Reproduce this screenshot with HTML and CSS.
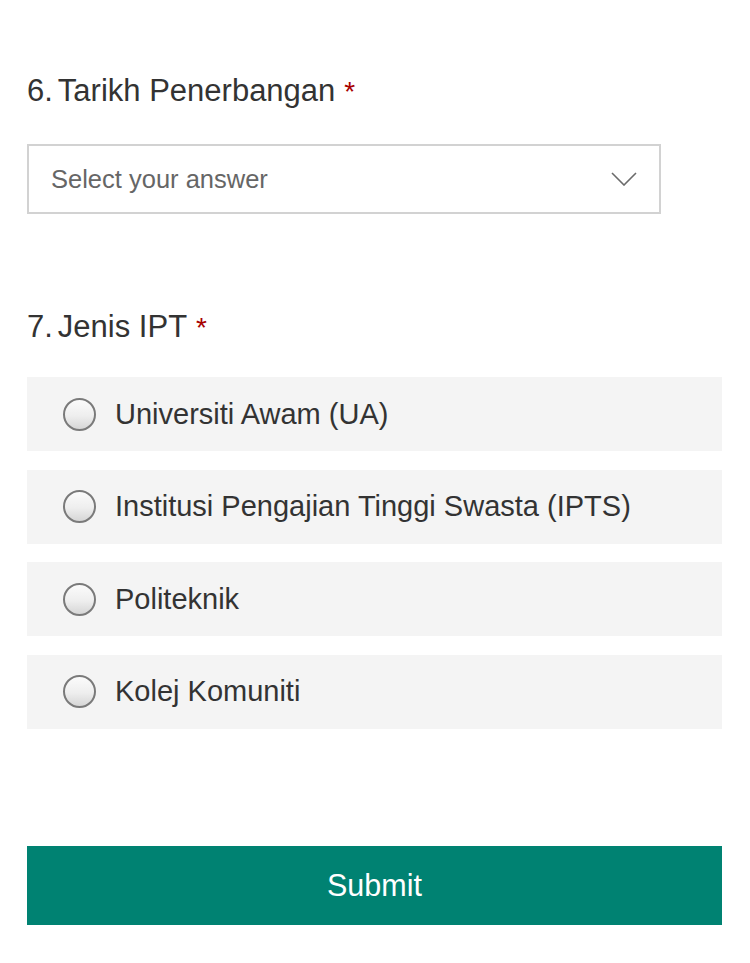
FILE: index.html
```html
<!DOCTYPE html>
<html lang="ms">
<head>
<meta charset="utf-8">
<title>Borang</title>
<link rel="stylesheet" href="styles.css">
</head>
<body>
<main class="form">
  <section class="question q-date">
    <h2 class="q-title">6.<span class="q-text">Tarikh Penerbangan</span><span class="req">*</span></h2>
    <div class="select">
      <span class="placeholder">Select your answer</span>
      <svg class="chevron" width="26" height="14" viewBox="0 0 26 14" aria-hidden="true">
        <polyline points="1,1 13,13 25,1" fill="none" stroke="#6b6b6b" stroke-width="1.6"/>
      </svg>
    </div>
  </section>

  <section class="question q-ipt">
    <h2 class="q-title">7.<span class="q-text">Jenis IPT</span><span class="req">*</span></h2>
    <div class="options">
      <label class="option"><span class="radio"></span><span class="opt-text">Universiti Awam (UA)</span></label>
      <label class="option"><span class="radio"></span><span class="opt-text">Institusi Pengajian Tinggi Swasta (IPTS)</span></label>
      <label class="option"><span class="radio"></span><span class="opt-text">Politeknik</span></label>
      <label class="option"><span class="radio"></span><span class="opt-text">Kolej Komuniti</span></label>
    </div>
  </section>

  <button class="submit" type="button">Submit</button>
</main>
</body>
</html>
```

FILE: styles.css
```css
html, body {
  margin: 0;
  padding: 0;
  background: #ffffff;
}

body {
  font-family: "Liberation Sans", Arial, sans-serif;
  color: #333333;
}

.form {
  padding: 72px 28px 0 27px;
  display: flex;
  flex-direction: column;
}

.q-title {
  margin: 0;
  font-size: 31px;
  line-height: 37px;
  font-weight: normal;
  color: #333333;
}

.q-text {
  margin-left: 5px;
}

.req {
  color: #a80000;
  margin-left: 9px;
  font-size: 28px;
}

.select {
  margin-top: 34px;
  width: 634px;
  height: 70px;
  box-sizing: border-box;
  border: 2px solid #d2d2d2;
  display: flex;
  align-items: center;
  justify-content: space-between;
  padding: 0 22px 0 22px;
  background: #ffffff;
}

.placeholder {
  font-size: 25.5px;
  color: #666666;
}

.chevron {
  display: block;
}

.q-ipt {
  margin-top: 94px;
}

.options {
  margin-top: 31px;
  display: flex;
  flex-direction: column;
  gap: 18.5px;
}

.option {
  height: 74px;
  background: #f4f4f4;
  display: flex;
  align-items: center;
  padding-left: 36px;
}

.radio {
  width: 29px;
  height: 29px;
  border: 2px solid #7a7a7a;
  border-radius: 50%;
  background: linear-gradient(to bottom, #fbfbfb 0%, #eeeeee 55%, #d6d6d6 100%);
  flex: none;
}

.opt-text {
  margin-left: 19px;
  font-size: 29px;
  color: #333333;
}

.submit {
  margin-top: 117px;
  height: 79px;
  border: 0;
  background: #008272;
  color: #ffffff;
  font-family: "Liberation Sans", Arial, sans-serif;
  font-size: 30.5px;
  cursor: pointer;
}
```
